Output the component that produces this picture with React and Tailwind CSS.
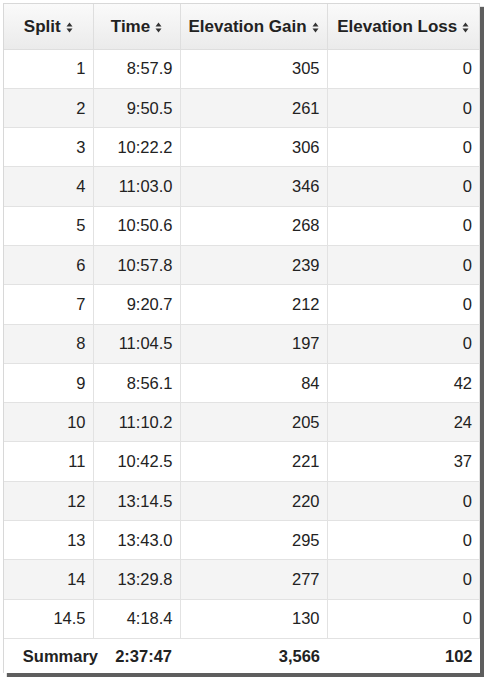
const rows = [
  ['1', '8:57.9', '305', '0'],
  ['2', '9:50.5', '261', '0'],
  ['3', '10:22.2', '306', '0'],
  ['4', '11:03.0', '346', '0'],
  ['5', '10:50.6', '268', '0'],
  ['6', '10:57.8', '239', '0'],
  ['7', '9:20.7', '212', '0'],
  ['8', '11:04.5', '197', '0'],
  ['9', '8:56.1', '84', '42'],
  ['10', '11:10.2', '205', '24'],
  ['11', '10:42.5', '221', '37'],
  ['12', '13:14.5', '220', '0'],
  ['13', '13:43.0', '295', '0'],
  ['14', '13:29.8', '277', '0'],
  ['14.5', '4:18.4', '130', '0'],
];

const headers = ['Split', 'Time', 'Elevation Gain', 'Elevation Loss'];

function SortIcon() {
  return (
    <svg width="7" height="11" viewBox="0 0 7 11" className="inline-block ml-[5px] align-middle">
      <path d="M3.5 0.5 L6.5 4.5 L0.5 4.5 Z" fill="#333" />
      <path d="M3.5 10.5 L6.5 6.5 L0.5 6.5 Z" fill="#333" />
    </svg>
  );
}

export default function App() {
  return (
    <div className="bg-white w-[484px] h-[677px] pt-[3px] pl-[3px]" style={{ fontFamily: '"Liberation Sans", Arial, sans-serif' }}>
      <div className="w-[477px] border-l border-t border-[#d8d8d8] bg-white shadow-[4px_4px_1px_rgba(40,40,40,0.75)]">
        <table className="w-full table-fixed border-collapse text-[16.5px] text-[#222]">
          <colgroup>
            <col className="w-[89px]" />
            <col className="w-[87px]" />
            <col className="w-[147px]" />
            <col />
          </colgroup>
          <thead>
            <tr className="h-[45px] bg-gradient-to-b from-[#fafafa] to-[#ebebeb]">
              {headers.map((h) => (
                <th key={h} className="border-r border-b border-[#dedede] font-bold text-[17px] text-center whitespace-nowrap px-1">
                  {h}
                  <SortIcon />
                </th>
              ))}
            </tr>
          </thead>
          <tbody>
            {rows.map((r, i) => (
              <tr key={r[0]} className={`h-[39.3px] ${i % 2 === 1 ? 'bg-[#f4f4f4]' : 'bg-white'}`}>
                {r.map((c, j) => (
                  <td key={j} className="border-r border-b border-[#e2e2e2] text-right pr-[7px]">
                    {c}
                  </td>
                ))}
              </tr>
            ))}
            <tr className="h-[35px] bg-white font-bold">
              <td className="text-right pr-0 whitespace-nowrap">
                <span className="inline-block -mr-[5px]">Summary</span>
              </td>
              <td className="text-right pr-[8px]">2:37:47</td>
              <td className="text-right pr-[7px]">3,566</td>
              <td className="text-right pr-[7px]">102</td>
            </tr>
          </tbody>
        </table>
      </div>
    </div>
  );
}
